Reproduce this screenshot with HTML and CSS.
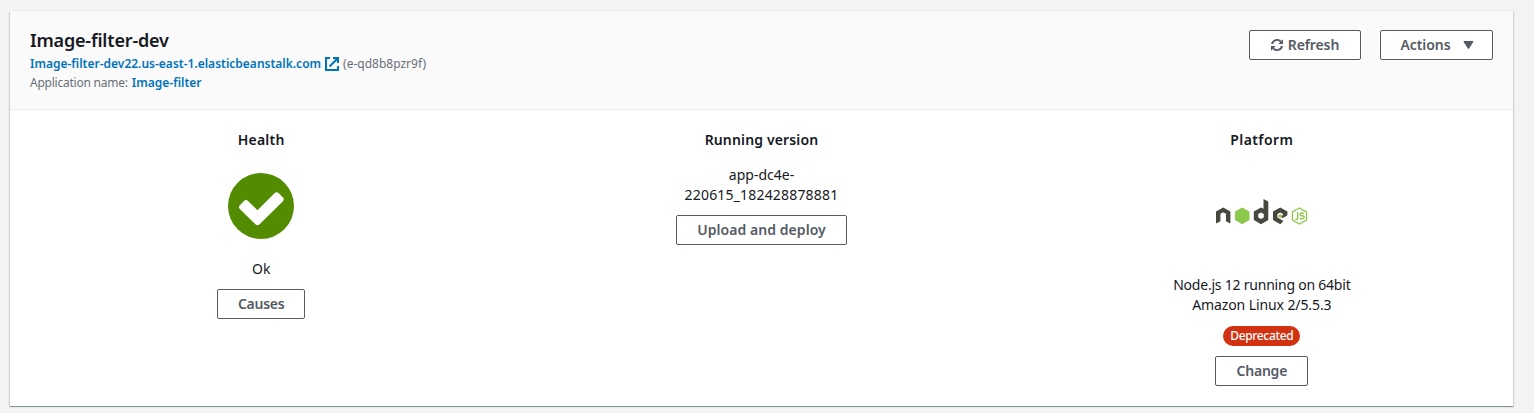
FILE: index.html
```html
<!DOCTYPE html>
<html lang="en">
<head>
<meta charset="utf-8">
<title>Image-filter-dev</title>
<link rel="stylesheet" href="styles.css">
</head>
<body>
<main class="card">
  <header class="header">
    <div class="info">
      <h1 class="title">Image-filter-dev</h1>
      <div class="line"><a class="link url">Image-filter-dev22.us-east-1.elasticbeanstalk.com</a><svg class="ext" viewBox="0 0 14 14"><path d="M5 1H1V13H13V9M8 1H13V6M12.5 1.5L4.5 9.5" fill="none" stroke="#0073bb" stroke-width="2"/></svg><span class="env">(e-qd8b8pzr9f)</span></div>
      <div class="line"><span class="appname">Application name:</span><a class="link app">Image-filter</a></div>
    </div>
    <div class="actions">
      <button class="btn refresh"><svg class="sync" viewBox="0 0 12 12"><path d="M1 5A5.1 5.1 0 0 1 9.8 2.6M11 7A5.1 5.1 0 0 1 2.2 9.4" fill="none" stroke="#545b64" stroke-width="1.9"/><path d="M12 .3V5H7.3ZM0 11.7V7H4.7Z" fill="#545b64"/></svg><span>Refresh</span></button>
      <button class="btn menu"><span>Actions</span><svg class="caret" viewBox="0 0 10 8"><path d="M.5 0H9.5Q10.2 0 9.8 .9L5.6 7.5Q5 8.3 4.4 7.5L.2 .9Q-.2 0 .5 0Z" fill="#545b64"/></svg></button>
    </div>
  </header>
  <div class="columns">
    <section class="col">
      <h2 class="heading health">Health</h2>
      <svg class="status" viewBox="0 0 66 66"><circle cx="33" cy="33" r="33" fill="#538b01"/><path d="M11.8 32.2L16 28Q18 26 20 28L29.5 37.2L46.5 20.3Q48.7 18.2 50.8 20.3L54.7 24.2Q56.8 26.3 54.7 28.4L31.6 51.2Q29.5 53.2 27.4 51.2L11.8 36Q10 34 11.8 32.2Z" fill="#fff"/></svg>
      <p class="text ok">Ok</p>
      <button class="btn causes"><span>Causes</span></button>
    </section>
    <section class="col">
      <h2 class="heading version">Running version</h2>
      <p class="text"><span class="v1">app-dc4e-</span><br><span class="v2">220615_182428878881</span></p>
      <button class="btn deploy"><span>Upload and deploy</span></button>
    </section>
    <section class="col">
      <h2 class="heading platform">Platform</h2>
      <svg class="node" viewBox="0 0 92 26">
        <g fill="#46483e">
          <path d="M0 24.5V12.6L7.2 8.5L14.4 12.6V24.5L10 22.2V14.8L7.2 13.2L4.4 14.8V22.2Z"/>
          <path fill-rule="evenodd" d="M47.5 0L52.3 2.4V21L45 25.2L37.8 21V12.6L45 8.5L47.5 9.8ZM45 13.5L42.2 15.1V18.4L45 20L47.8 18.4V15.1Z"/>
          <path d="M64.2 8.5L71.4 12.6V16.3L66.5 19.2L65 17.2L67 16V15.1L64.2 13.5L61.4 15.1V18.5L67.5 22L64.2 25.2L57 21V12.6Z"/>
        </g>
        <path d="M26.2 8.5L33.4 12.6V21L26.2 25.2L19 21V12.6Z" fill="#8cc84b"/>
        <path d="M64.2 15.2L65.9 16.1V18L64.2 19L62.5 18V16.1Z" fill="#8cc84b"/>
        <path d="M83.4 9L90.5 13V21L83.4 25L76.4 21V13Z" fill="none" stroke="#8cc84b" stroke-width="1.3"/>
        <path d="M81.6 13.3V19.3Q81.6 21.2 79.3 20.4M88 14.5Q84 13.2 84 15.4Q84 16.6 86 16.8Q88.3 17.1 88.2 18.6Q87.8 20.4 83.7 19.3" fill="none" stroke="#8cc84b" stroke-width="1.4"/>
      </svg>
      <p class="text"><span class="p1">Node.js 12 running on 64bit</span><br><span class="p2">Amazon Linux 2/5.5.3</span></p>
      <span class="badge">Deprecated</span>
      <button class="btn change"><span>Change</span></button>
    </section>
  </div>
</main>
</body>
</html>
```
FILE: styles.css
```css
* { box-sizing: border-box; }
body { margin: 0; padding: 11px 21px 7px 10px; background: #f2f3f3; font-family: "Noto Sans", "Open Sans", sans-serif; color: #16191f; }
h1, h2, p { margin: 0; }
.card { height: 395px; background: #fff; box-shadow: 0 1px 0 #879596, 0 -1px 0 #eaeded, 1px 1px 1px 0 rgba(0,28,36,.15), -1px 1px 1px 0 rgba(0,28,36,.15); }
.header { height: 99px; padding: 19px 20px 0; display: flex; justify-content: space-between; background: #fafafa; border-bottom: 1px solid #eaeded; }
.info { margin-top: -1px; }
.title { font-size: 18px; line-height: 22px; font-weight: 600; margin-bottom: 3px; white-space: nowrap; letter-spacing: -.18px; }
.line { height: 19px; display: flex; align-items: center; font-size: 12px; line-height: 19px; color: #687078; white-space: nowrap; }
.link { font-weight: 600; color: #0073bb; }
.ext { width: 14px; height: 14px; margin: 0 4px; flex: none; }
.appname { letter-spacing: -.23px; }
.app { margin-left: 4px; }
.actions { display: flex; gap: 19px; }
.btn { height: 30px; padding: 0; display: flex; align-items: center; justify-content: center; background: #fff; border: 1px solid #545b64; border-radius: 2px; font: 600 14px/20px "Noto Sans", "Open Sans", sans-serif; color: #545b64; white-space: nowrap; }
.refresh { width: 112px; gap: 5px; letter-spacing: -.1px; }
.menu { width: 113px; gap: 12px; padding-left: 1px; letter-spacing: -.05px; }
.sync { width: 12px; height: 12px; }
.caret { width: 11px; height: 8px; }
.causes { width: 88px; letter-spacing: -.25px; }
.deploy { width: 171px; letter-spacing: .06px; }
.change { width: 93px; letter-spacing: -.2px; }
.columns { display: flex; padding: 20px 1px 0; }
.col { flex: 1; display: flex; flex-direction: column; align-items: center; }
.heading { font-size: 14px; line-height: 20px; font-weight: 600; margin-bottom: 15px; }
.health { letter-spacing: .2px; }
.version { letter-spacing: .15px; }
.platform { letter-spacing: .4px; }
.text { font-size: 14px; line-height: 20px; text-align: center; margin-bottom: 10px; white-space: nowrap; }
.v2 { letter-spacing: .18px; }
.p1 { letter-spacing: -.22px; }
.p2 { letter-spacing: -.1px; }
.status { width: 66px; height: 66px; margin: 8px 0 20px; }
.node { width: 92px; height: 26px; margin: 34px 0 50px; }
.badge { width: 77px; height: 20px; border-radius: 10px; background: #d13212; color: #fff; font-size: 12px; font-weight: 500; line-height: 20px; text-align: center; margin: 1px 0 10px; letter-spacing: -.35px; }
```
